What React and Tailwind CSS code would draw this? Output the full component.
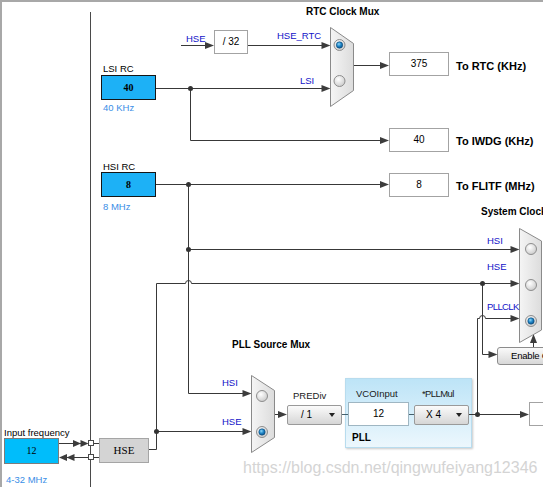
import React from "react";

const S = "#383838";
const AH = "#3c3c3c";

function ArrowR({ x, y, l = 9, h = 3.5 }) {
  return <polygon points={`${x - l},${y - h} ${x},${y} ${x - l},${y + h}`} fill={AH} />;
}
function ArrowL({ x, y, l = 9, h = 3.5 }) {
  return <polygon points={`${x + l},${y - h} ${x},${y} ${x + l},${y + h}`} fill={AH} />;
}
function ArrowU({ x, y, l = 9, h = 3.5 }) {
  return <polygon points={`${x - h},${y + l} ${x},${y} ${x + h},${y + l}`} fill={AH} />;
}
function Dot({ x, y }) {
  return <circle cx={x} cy={y} r="2.5" fill="#333" />;
}
function Radio({ cx, cy, on }) {
  return (
    <g>
      <circle cx={cx} cy={cy} r="5.5" fill="url(#radioG)" stroke="#8e8e8e" strokeWidth="1" />
      {on && <circle cx={cx} cy={cy} r="3.2" fill="url(#radioOn)" stroke="#0b4a78" strokeWidth="0.6" />}
    </g>
  );
}

function Wires() {
  return (
    <svg className="absolute left-0 top-0 pointer-events-none" width="543" height="487">
      <defs>
        <linearGradient id="muxG" x1="0" y1="0" x2="1" y2="0">
          <stop offset="0" stopColor="#f5f5f5" />
          <stop offset="1" stopColor="#dcdcdc" />
        </linearGradient>
        <radialGradient id="radioG" cx="0.4" cy="0.35" r="0.7">
          <stop offset="0" stopColor="#ffffff" />
          <stop offset="1" stopColor="#c9c9c9" />
        </radialGradient>
        <radialGradient id="radioOn" cx="0.4" cy="0.35" r="0.7">
          <stop offset="0" stopColor="#8fd8f8" />
          <stop offset="0.5" stopColor="#1f86c8" />
          <stop offset="1" stopColor="#0b4f86" />
        </radialGradient>
      </defs>

      <path d="M90.5 12V487" stroke="#4a4a4a" strokeWidth="1" fill="none" />

      <g stroke={S} strokeWidth="1" fill="none">
        <path d="M181 45.5H206" />
        <path d="M248 45.5H322" />
        <path d="M156 88.5H322" />
        <path d="M190.5 88.5V140.5H381" />
        <path d="M354 65.5H381" />
        <path d="M156 184.5H381" />
        <path d="M188.5 184.5V393.5H243" />
        <path d="M188.5 249.5H511" />
        <path d="M149 449.5H156.5V283.5H185.5A3 3 0 0 1 191.5 283.5H511" />
        <path d="M156.5 431.5H243" />
        <path d="M482.5 283.5V354.5H489" />
        <path d="M477.5 414.5V318.5H479.5A3 3 0 0 1 485.5 318.5H511" />
        <path d="M275 414.5H279" />
        <path d="M469 414.5H521" />
        <path d="M533.5 347V342" />
        <path d="M59 443.5H86" />
        <path d="M88 457.5H61" />
        <path d="M94 443.5H99M94 457.5H99" />
      </g>
      <g stroke="#44606c" strokeWidth="1" fill="none">
        <path d="M342 414.5H348M409 414.5H414" />
      </g>

      <ArrowR x={214} y={45.5} />
      <ArrowR x={330.5} y={45.5} />
      <ArrowR x={330.5} y={88.5} />
      <ArrowR x={389} y={140.5} />
      <ArrowR x={389} y={65.5} />
      <ArrowR x={389} y={184.5} />
      <ArrowR x={251.5} y={393.5} />
      <ArrowR x={519.5} y={249.5} />
      <ArrowR x={519.5} y={283.5} />
      <ArrowR x={251.5} y={431.5} />
      <ArrowR x={497.5} y={354.5} />
      <ArrowR x={519.5} y={318.5} />
      <ArrowR x={287} y={414.5} />
      <ArrowR x={529} y={414.5} />
      <ArrowU x={533.5} y={334} />
      <ArrowR x={81} y={443.5} l={8} />
      <ArrowR x={88.5} y={443.5} l={8} />
      <ArrowL x={59} y={457.5} l={8} />
      <ArrowL x={66.5} y={457.5} l={8} />

      <rect x="88.5" y="440.5" width="5" height="5" fill="#fff" stroke="#4a4a4a" />
      <rect x="88.5" y="454.5" width="5" height="5" fill="#fff" stroke="#4a4a4a" />

      <Dot x={190.5} y={88.5} />
      <Dot x={188.5} y={184.5} />
      <Dot x={188.5} y={249.5} />
      <Dot x={156.5} y={431.5} />
      <Dot x={482.5} y={283.5} />
      <Dot x={477.5} y={414.5} />

      <polygon points="330.5,27.5 353.5,43.5 353.5,90.5 330.5,106.5" fill="url(#muxG)" stroke="#8a8a8a" />
      <Radio cx={339.5} cy={45} on />
      <Radio cx={339.5} cy={81} />

      <polygon points="251.5,375.5 274.5,390.5 274.5,437.5 251.5,452.5" fill="url(#muxG)" stroke="#8a8a8a" />
      <Radio cx={262} cy={396} />
      <Radio cx={262} cy={432} on />

      <polygon points="519.5,228.5 541.5,241 541.5,330 519.5,342.5" fill="url(#muxG)" stroke="#8a8a8a" />
      <Radio cx={531} cy={249} />
      <Radio cx={531} cy={285} />
      <Radio cx={531} cy={321} on />
    </svg>
  );
}

function Caret() {
  return <span className="w-0 h-0 border-l-[3.5px] border-r-[3.5px] border-t-[4px] border-l-transparent border-r-transparent border-t-[#222]" />;
}

export default function App() {
  return (
    <div className="relative w-[543px] h-[487px] overflow-hidden bg-white text-black font-['Liberation_Sans',Arial,sans-serif] shadow-[inset_2px_2px_0_#a8a8a8]">
      {/* HSE / 32 divider */}
      <div className="absolute left-[186px] top-[34px] flex items-start">
        <span className="w-[28px] text-[9.5px] leading-none text-[#1212c8]">HSE</span>
        <div className="-mt-[4px] w-[34px] h-[24px] border border-[#a3a3a3] bg-white flex items-center justify-center text-[10px] leading-none">/ 32</div>
      </div>

      {/* output rows */}
      <div className="absolute left-[389px] top-[52px] flex items-start gap-[7px]">
        <div className="w-[60px] h-[24px] border border-[#a3a3a3] bg-white flex items-center justify-center text-[10px] leading-none">375</div>
        <span className="mt-[9px] text-[11px] font-bold leading-none whitespace-nowrap">To RTC (KHz)</span>
      </div>
      <div className="absolute left-[389px] top-[128px] flex items-start gap-[7px]">
        <div className="w-[60px] h-[24px] border border-[#a3a3a3] bg-white flex items-center justify-center text-[10px] leading-none">40</div>
        <span className="mt-[8px] text-[11px] font-bold leading-none whitespace-nowrap">To IWDG (KHz)</span>
      </div>
      <div className="absolute left-[389px] top-[173px] flex items-start gap-[7px]">
        <div className="w-[60px] h-[24px] border border-[#a3a3a3] bg-white flex items-center justify-center text-[10px] leading-none">8</div>
        <span className="mt-[8px] text-[11px] font-bold leading-none whitespace-nowrap">To FLITF (MHz)</span>
      </div>

      {/* oscillators */}
      <div className="absolute left-[101px] top-[64px] flex flex-col">
        <span className="pl-[2px] text-[9.5px] leading-none whitespace-nowrap">LSI RC</span>
        <div className="mt-[1.5px] w-[55px] h-[25px] border border-[#151515] bg-[#1db1f6] flex items-center justify-center font-['Liberation_Serif',serif] font-bold text-[10px] leading-none">40</div>
        <span className="mt-[2.5px] pl-[2px] text-[9.5px] leading-none text-[#3a8ee6] whitespace-nowrap">40 KHz</span>
      </div>
      <div className="absolute left-[101px] top-[162px] flex flex-col">
        <span className="pl-[2px] text-[9.5px] leading-none whitespace-nowrap">HSI RC</span>
        <div className="mt-[0.5px] w-[55px] h-[25px] border border-[#151515] bg-[#1db1f6] flex items-center justify-center font-['Liberation_Serif',serif] font-bold text-[10px] leading-none">8</div>
        <span className="mt-[4.5px] pl-[2px] text-[9.5px] leading-none text-[#3a8ee6] whitespace-nowrap">8 MHz</span>
      </div>

      {/* input frequency */}
      <div className="absolute left-[4px] top-[428px] flex flex-col">
        <span className="text-[9.5px] leading-none whitespace-nowrap">Input frequency</span>
        <div className="mt-[0.5px] w-[55px] h-[26px] border border-[#7c7c7c] bg-[#00bdfb] flex items-center justify-center font-['Liberation_Serif',serif] text-[10px] leading-none">12</div>
        <span className="mt-[10.5px] pl-[2px] text-[9.5px] leading-none text-[#3a8ee6] whitespace-nowrap">4-32 MHz</span>
      </div>
      <div className="absolute left-[99px] top-[438px] w-[50px] h-[25px] border border-[#a5a5a5] bg-[#d4d4d4] flex items-center justify-center font-['Liberation_Serif',serif] text-[11px] leading-none">HSE</div>

      {/* PREDiv + PLL */}
      <div className="absolute left-[287px] top-[378px] flex items-start gap-[3px]">
        <div className="flex flex-col pt-[12.5px]">
          <span className="pl-[6px] text-[9.5px] leading-none text-[#1a1a1a]">PREDiv</span>
          <div className="mt-[5px] w-[55px] h-[20px] rounded-[2px] border border-[#9a9a9a] bg-linear-to-b from-[#fbfbfb] to-[#d6d6d6] flex items-center justify-between pl-[13px] pr-[6px] text-[10px] leading-none">
            <span>/ 1</span>
            <Caret />
          </div>
        </div>
        <div className="w-[127px] h-[70px] border border-[#b8dcee] bg-linear-to-b from-[#bde4f7] to-[#ecf7fd] shadow-[1px_1px_2px_rgba(0,0,0,0.22)] flex flex-col px-[2px] pt-[10px]">
          <div className="flex items-start gap-[5px]">
            <div className="flex flex-col w-[61px]">
              <span className="pl-[8px] text-[9.5px] leading-none text-[#1a1a1a]">VCOInput</span>
              <div className="mt-[3.5px] w-[61px] h-[24px] border border-[#9fb6c2] bg-white flex items-center justify-center text-[10px] leading-none">12</div>
            </div>
            <div className="flex flex-col w-[55px]">
              <span className="pl-[8px] text-[9.5px] leading-none tracking-[-0.6px] text-[#1a1a1a]">*PLLMul</span>
              <div className="mt-[6.5px] w-[55px] h-[20px] rounded-[2px] border border-[#9a9a9a] bg-linear-to-b from-[#fbfbfb] to-[#d6d6d6] flex items-center justify-between pl-[11px] pr-[6px] text-[10px] leading-none">
                <span>X 4</span>
                <Caret />
              </div>
            </div>
          </div>
          <span className="mt-[7px] pl-[4px] text-[10px] font-bold leading-none">PLL</span>
        </div>
      </div>

      <div className="absolute left-[529px] top-[402px] w-[30px] h-[24px] border border-[#a3a3a3] bg-white" />

      <div className="absolute left-[497px] top-[347px] w-[70px] h-[18px] rounded-[3px] border border-[#8c8c8c] bg-linear-to-b from-[#fafafa] to-[#d8d8d8] flex items-center pl-[13px] text-[9.5px] tracking-[-0.2px] leading-none whitespace-nowrap">Enable CSS</div>

      <Wires />

      {/* mux titles and inputs */}
      <div className="absolute left-[306px] top-[7px] text-[10px] font-bold leading-none whitespace-nowrap">RTC Clock Mux</div>
      <div className="absolute left-[277px] top-[31px] text-[9.5px] leading-none text-[#1212c8] whitespace-nowrap">HSE_RTC</div>
      <div className="absolute left-[300px] top-[75.5px] text-[9.5px] leading-none text-[#1212c8]">LSI</div>

      <div className="absolute left-[481px] top-[207px] text-[10px] font-bold leading-none whitespace-nowrap">System Clock Mux</div>
      <div className="absolute left-[487px] top-[235.5px] flex flex-col text-[9.5px] leading-none text-[#1212c8]">
        <span>HSI</span>
        <span className="mt-[17px]">HSE</span>
        <span className="mt-[30.5px] tracking-[-0.6px]">PLLCLK</span>
      </div>

      <div className="absolute left-[232px] top-[340px] text-[10px] font-bold leading-none whitespace-nowrap">PLL Source Mux</div>
      <div className="absolute left-[222px] top-[378px] flex flex-col text-[9.5px] leading-none text-[#1212c8]">
        <span>HSI</span>
        <span className="mt-[29.5px]">HSE</span>
      </div>

      {/* watermark */}
      <div className="absolute left-[243px] top-[459.5px] text-[16px] leading-none text-[#d4d4d4] whitespace-nowrap pointer-events-none">https://blog.csdn.net/qingwufeiyang12346</div>
    </div>
  );
}
